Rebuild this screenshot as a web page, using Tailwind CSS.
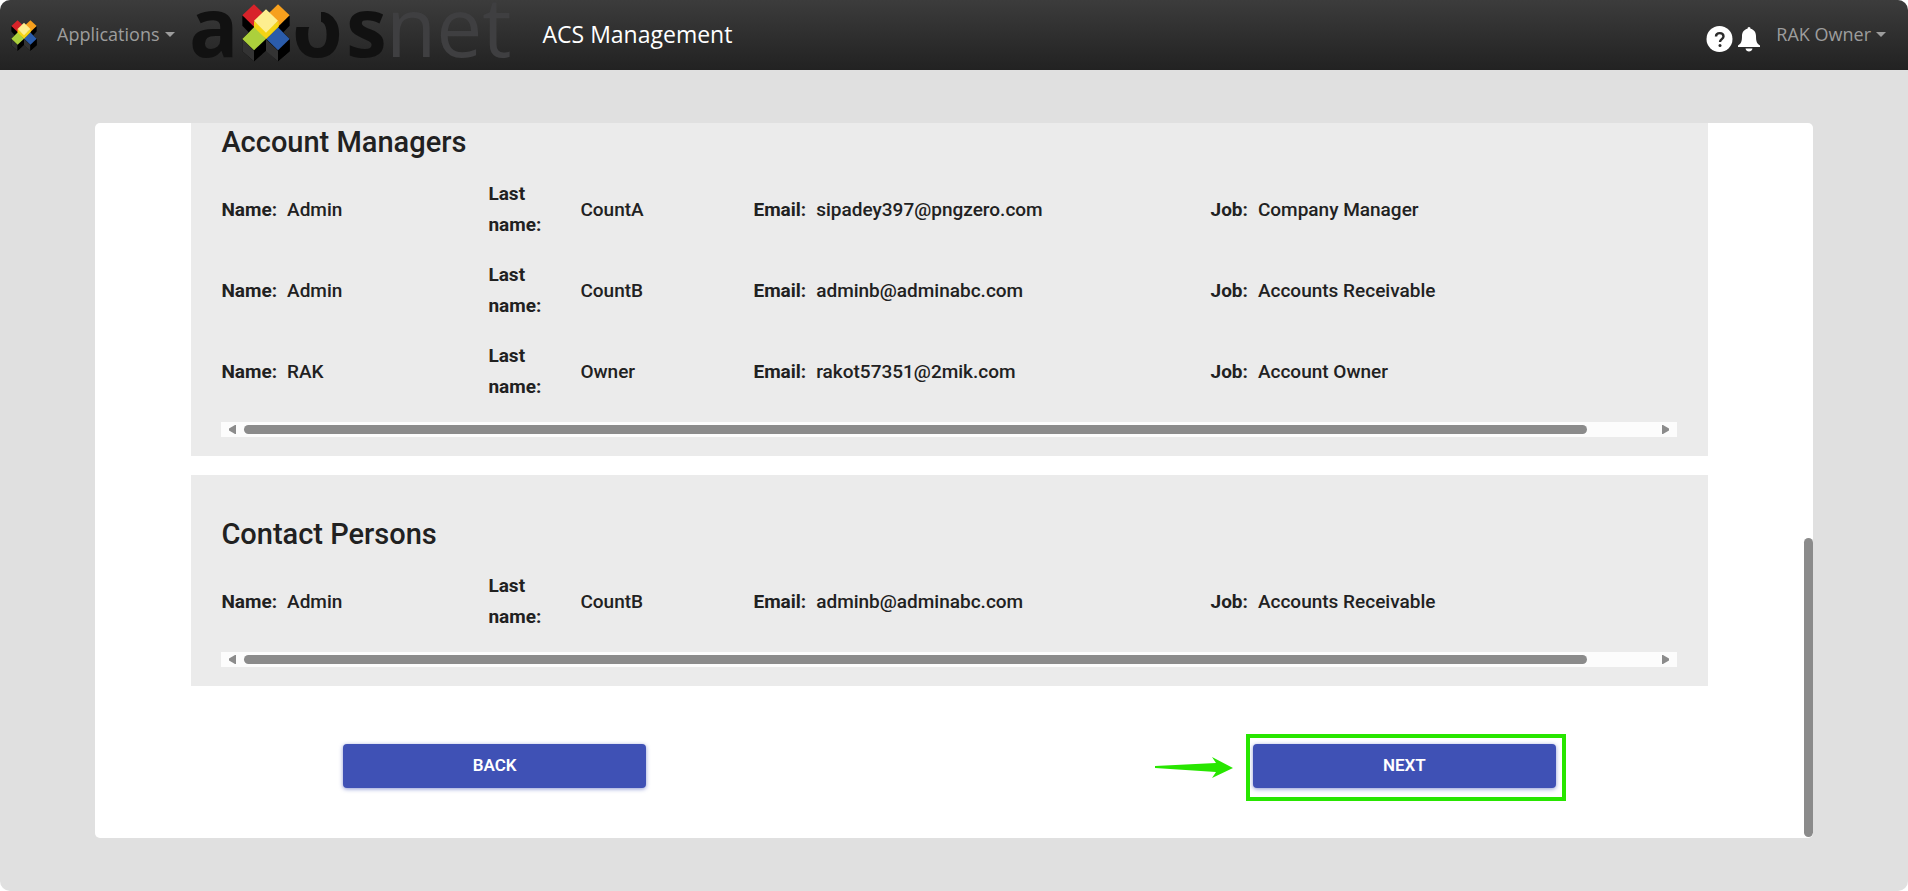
<!DOCTYPE html>
<html lang="en">
<head>
    <meta charset="UTF-8">
    <meta name="viewport" content="width=device-width, initial-scale=1.0">
    <title>ACS Management</title>
    <script src="https://cdn.jsdelivr.net/npm/@tailwindcss/browser@4"></script>
</head>
<body class="bg-white font-['Roboto',sans-serif] text-[#212121]">
    <svg class="hidden">
        <symbol id="cubes" viewBox="0 0 144 174">
            <path fill="#000" d="M1 34 L36 60 V172 L1 142 V105 L20 85 L1 65Z M143 34 L108 60 V172 L143 142 V105 L124 85 L143 65Z M36 172 L72 140 L108 172 V110 L72 90 L36 110Z"/>
            <path fill="#333" d="M1 106 L36 140 V172 L1 142Z M72 106 L108 140 V172 L72 142Z"/>
            <path fill="#000" d="M36 140 L60 116 V150 L36 172Z M108 140 L143 106 V142 L108 172Z"/>
            <path fill="#d8232a" d="M36 1 L70 34 L36 68 L1 34Z"/>
            <path fill="#f7a01d" d="M108 1 L143 34 L108 68 L74 34Z"/>
            <path fill="#2b5caa" d="M108 70 L143 105 L108 139 L73 105Z"/>
            <path fill="#f4d414" d="M36 51 L72 78 L110 51 V68 L72 106 L36 76Z"/>
            <path fill="#fdee8f" d="M72 16 L108 50 L72 86 L36 50Z"/>
            <path fill="#acd03c" d="M36 70 L72 105 L36 139 L1 105Z"/>
        </symbol>
    </svg>

    <div class="min-h-screen flex flex-col bg-[#e0e0e0] rounded-[10px] overflow-hidden">
        <!-- Navbar -->
        <nav class="h-[70px] flex items-center pl-[11px] pr-[22px] bg-linear-to-b from-[#3c3c3c] to-[#222] font-['Open_Sans',sans-serif] text-lg text-[#9d9d9d]">
            <a href="#" aria-label="Home"><svg class="w-[26px] h-[31px]"><use href="#cubes"/></svg></a>
            <a href="#" class="flex items-center gap-[5px] ml-5 pb-0.5">Applications
                <svg class="w-[10px] h-[5px]" viewBox="0 0 10 5"><path fill="currentColor" d="M0 0h10L5 5z"/></svg>
            </a>
            <a href="#" class="ml-[17px]" aria-label="axosnet">
                <svg class="w-[322px] h-[70px] overflow-visible" viewBox="0 0 322 70">
                    <defs>
                        <clipPath id="openO"><path d="M100 27H129V12H170V62H100Z"/></clipPath>
                    </defs>
                    <g font-family="Open Sans" font-size="82">
                        <text x="-3" y="57" font-weight="700" fill="#111">a</text>
                        <text x="100" y="57" font-weight="700" fill="#111" clip-path="url(#openO)">o</text>
                        <text x="154" y="57" font-weight="700" fill="#111">s</text>
                        <text x="194" y="57" fill="#3f3f41">net</text>
                    </g>
                    <use href="#cubes" x="50" y="4" width="48" height="58"/>
                </svg>
            </a>
            <h1 class="ml-[29px] text-[23px] text-white">ACS Management</h1>
            <div class="ml-auto flex items-center">
                <button type="button" aria-label="Help" class="mt-2">
                    <svg class="w-[27px] h-[27px]" viewBox="0 0 27 27">
                        <circle cx="13.5" cy="13" r="13" fill="#fff"/>
                        <path d="M10 10.500c0-4.500 7.500-4.500 7.500 0c0 2.500-3.500 2.800-3.500 5.500" fill="none" stroke="#2b2b2b" stroke-width="2.400"/>
                        <circle cx="14" cy="19.500" r="1.500" fill="#2b2b2b"/>
                    </svg>
                </button>
                <button type="button" aria-label="Notifications" class="mt-2 ml-[5px]">
                    <svg class="w-[22px] h-[25px]" viewBox="0 0 22 25">
                        <path fill="#fff" d="M11 0c1 0 1.500.8 1.500 1.800C16 2.500 18 5.500 18 9c0 6 1 7.500 4 9.500V20H0v-1.500C3 16.500 4 15 4 9c0-3.500 2-6.500 5.500-7.200C9.500.8 10 0 11 0zM7.500 21.500h7c-.5 4-6.500 4-7 0z"/>
                    </svg>
                </button>
                <a href="#" class="flex items-center gap-[5px] ml-4 pb-0.5">RAK Owner
                    <svg class="w-[10px] h-[5px]" viewBox="0 0 10 5"><path fill="currentColor" d="M0 0h10L5 5z"/></svg>
                </a>
            </div>
        </nav>

        <main class="mx-[5%] mt-[53px] mb-[53px] relative bg-white rounded-[5px] overflow-hidden pl-24 pr-[105px] pb-[50px]">
            <!-- Account Managers -->
            <section class="bg-[#ebebeb] pl-[30px] pr-[31px] pt-px pb-[19px]">
                <h2 class="text-[29px] leading-9 font-medium">Account Managers</h2>
                <div id="managers" class="pt-2 pb-[11px] text-[19px] leading-[31px]"></div>
                <div class="h-[15px] flex items-center px-2 gap-2 bg-[#fcfcfc]">
                    <svg class="w-[7px] h-[9px]" viewBox="0 0 7 9"><path fill="#8b8b8b" d="M7 0v9H6L0 5.500v-2L6 0z"/></svg>
                    <div class="flex-1"><div class="w-[95.3%] h-[9px] rounded-full bg-[#8b8b8b]"></div></div>
                    <svg class="w-[7px] h-[9px]" viewBox="0 0 7 9"><path fill="#8b8b8b" d="M0 0v9h1l6-3.500v-2L1 0z"/></svg>
                </div>
            </section>

            <!-- Contact Persons -->
            <section class="mt-[19px] bg-[#ebebeb] pl-[30px] pr-[31px] pt-[41px] pb-[19px]">
                <h2 class="text-[29px] leading-9 font-medium">Contact Persons</h2>
                <div id="contacts" class="pt-2 pb-[11px] text-[19px] leading-[31px]"></div>
                <div class="h-[15px] flex items-center px-2 gap-2 bg-[#fcfcfc]">
                    <svg class="w-[7px] h-[9px]" viewBox="0 0 7 9"><path fill="#8b8b8b" d="M7 0v9H6L0 5.500v-2L6 0z"/></svg>
                    <div class="flex-1"><div class="w-[95.3%] h-[9px] rounded-full bg-[#8b8b8b]"></div></div>
                    <svg class="w-[7px] h-[9px]" viewBox="0 0 7 9"><path fill="#8b8b8b" d="M0 0v9h1l6-3.500v-2L1 0z"/></svg>
                </div>
            </section>

            <div class="mt-[58px] grid grid-cols-10 text-[17px] font-semibold text-white">
                <button type="button" class="col-start-2 col-span-2 h-11 pb-px rounded bg-[#3f51b5] shadow-[0_1px_4px_rgba(63,81,181,0.6)]">BACK</button>
                <div class="col-start-8 col-span-2 relative">
                    <button type="button" class="w-full h-11 pb-px rounded bg-[#3f51b5] shadow-[0_1px_4px_rgba(63,81,181,0.6)]">NEXT</button>
                    <div class="absolute -left-[7px] -right-[10px] -top-[10px] -bottom-[13px] border-4 border-[#28e600] pointer-events-none"></div>
                    <svg class="absolute right-full mr-5 top-[13px] w-[78px] h-[21px]" viewBox="0 0 78 21"><path fill="#28e600" d="M0 9L61 6L57 0L78 11L57 21L61 15L0 11Z"/></svg>
                </div>
            </div>

            <div class="absolute right-0 top-[58%] bottom-px w-[9px] rounded-full bg-[#8b8b8b]"></div>
        </main>
    </div>

    <script>
        const managers = [
            ['Admin', 'CountA', 'sipadey397@pngzero.com', 'Company Manager'],
            ['Admin', 'CountB', 'adminb@adminabc.com', 'Accounts Receivable'],
            ['RAK', 'Owner', 'rakot57351@2mik.com', 'Account Owner']
        ];
        const contacts = [
            ['Admin', 'CountB', 'adminb@adminabc.com', 'Accounts Receivable']
        ];

        function renderPeople(id, people) {
            let html = '';
            for (const [name, lastName, email, job] of people) {
                html += `<dl class="grid grid-cols-[267fr_265fr_457fr_466fr] items-center pt-[10px] pb-[9px] font-medium">
                    <div class="flex gap-[10px]"><dt class="font-bold">Name:</dt><dd>${name}</dd></div>
                    <div class="flex items-center gap-[10px]"><dt class="font-bold w-[82px]">Last name:</dt><dd>${lastName}</dd></div>
                    <div class="flex gap-[10px]"><dt class="font-bold">Email:</dt><dd>${email}</dd></div>
                    <div class="flex gap-[10px]"><dt class="font-bold">Job:</dt><dd>${job}</dd></div>
                </dl>`;
            }
            document.getElementById(id).innerHTML = html;
        }

        renderPeople('managers', managers);
        renderPeople('contacts', contacts);
    </script>
</body>
</html>
